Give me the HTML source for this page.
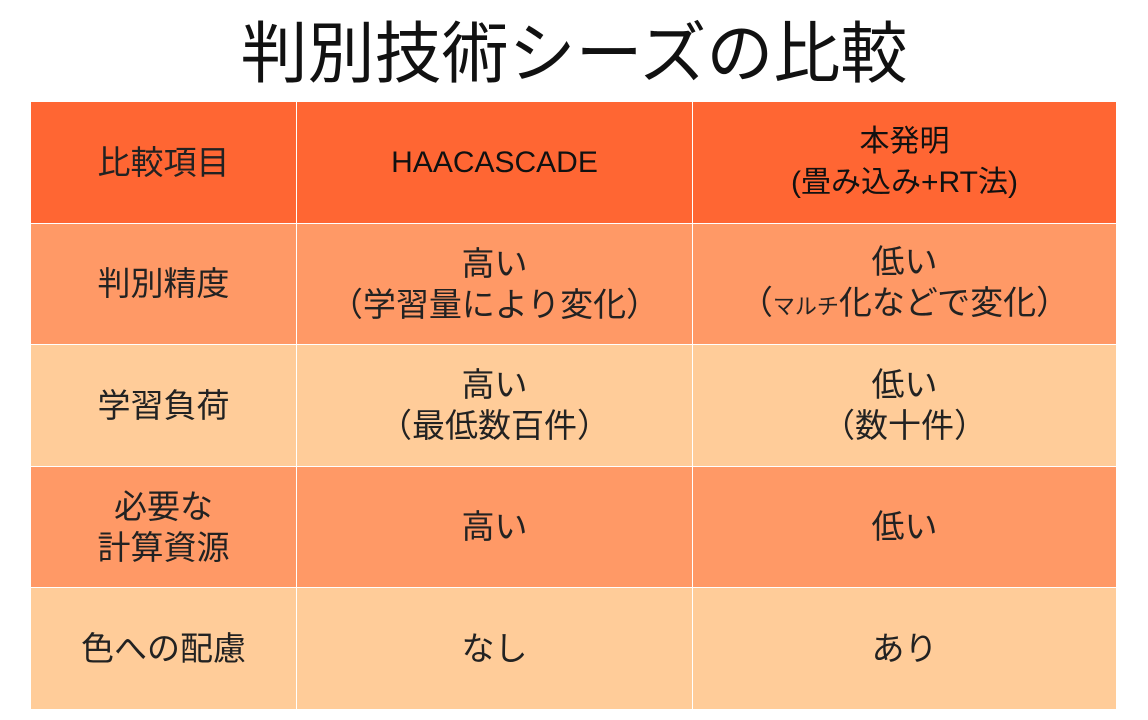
<!DOCTYPE html>
<html><head><meta charset="utf-8"><style>
body{margin:0;width:1148px;height:720px;background:#fff;overflow:hidden;font-family:"Liberation Sans","Noto Sans CJK JP",sans-serif;}
h1{position:absolute;left:0;top:12px;width:1148px;margin:0;text-align:center;font-weight:normal;font-size:67px;line-height:86px;color:#111;}
table{position:absolute;left:30px;top:101px;border-collapse:collapse;}
td{border:1px solid #fff;text-align:center;vertical-align:middle;font-size:33px;line-height:41px;color:#222;height:120.5px;padding:0;}
.h td{background:#ff6633;}
.a td{background:#ff9966;}
.b td{background:#ffcc99;}
</style></head><body>
<h1>判別技術シーズの比較</h1>
<table>
<colgroup><col style="width:266px"><col style="width:396px"><col style="width:424px"></colgroup>
<tr class="h"><td>比較項目</td><td style="font-size:30px;color:#111">HAACASCADE</td><td style="font-size:30px;color:#111">本発明<br>(畳み込み+RT法)</td></tr>
<tr class="a"><td>判別精度</td><td>高い<br>（学習量により変化）</td><td>低い<br>（<span style="font-size:22px">マルチ</span>化などで変化）</td></tr>
<tr class="b"><td>学習負荷</td><td>高い<br>（最低数百件）</td><td>低い<br>（数十件）</td></tr>
<tr class="a"><td>必要な<br>計算資源</td><td>高い</td><td>低い</td></tr>
<tr class="b"><td>色への配慮</td><td>なし</td><td>あり</td></tr>
</table>
</body></html>
